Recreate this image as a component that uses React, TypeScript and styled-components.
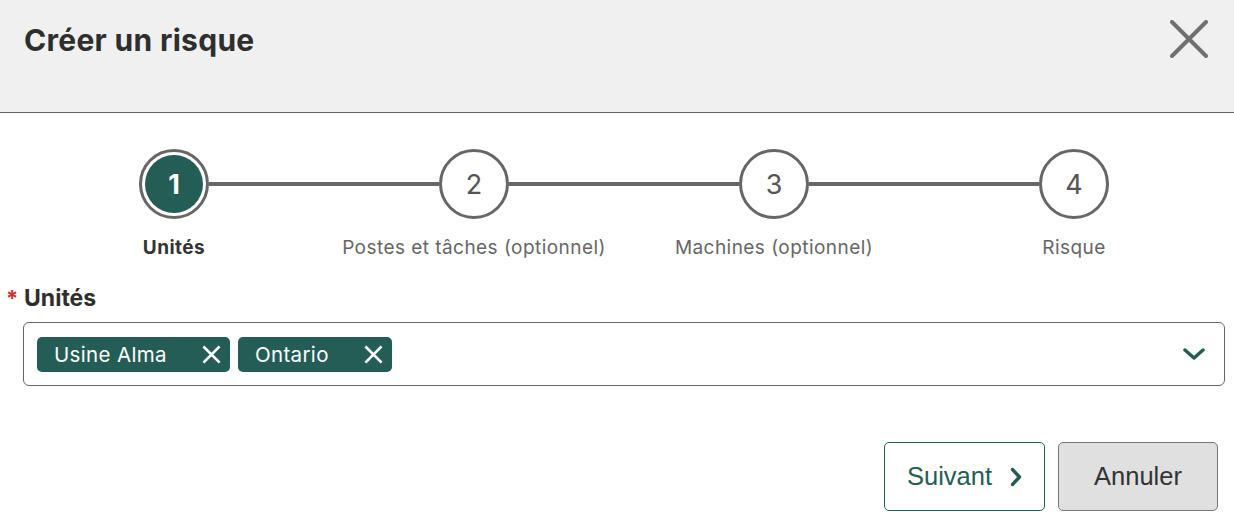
import React from 'react';
import styled, { createGlobalStyle } from 'styled-components';

const teal = '#245d56';

const GlobalStyle = createGlobalStyle`
  html, body {
    margin: 0;
    padding: 0;
    background: #ffffff;
    font-family: Inter, "Noto Sans", sans-serif;
  }
`;

const Dialog = styled.div`
  width: 1234px;
  min-height: 528px;
  background: #ffffff;
`;

const Header = styled.header`
  height: 113px;
  box-sizing: border-box;
  display: flex;
  justify-content: space-between;
  align-items: flex-start;
  padding: 20px 26px 0 24px;
  background: #f0f0f0;
  border-bottom: 1px solid #666666;
`;

const Title = styled.h1`
  margin: 0;
  font-size: 30px;
  line-height: 40px;
  font-weight: 700;
  color: #2e2e2e;
  letter-spacing: 0.3px;
`;

const CloseButton = styled.button`
  width: 38px;
  height: 38px;
  padding: 0;
  border: none;
  background: transparent;
  cursor: pointer;
  display: flex;
`;

const Body = styled.div`
  padding-top: 36px;
`;

const StepTrack = styled.div`
  display: flex;
  align-items: center;
  padding: 0 125px 0 139px;
`;

const StepCircle = styled.div`
  width: 70px;
  height: 70px;
  box-sizing: border-box;
  flex: none;
  border-radius: 50%;
  border: 3px solid #666666;
  padding: 3px;
  background: #ffffff;
  display: flex;
`;

const StepInner = styled.span<{ $active?: boolean }>`
  flex: 1;
  border-radius: 50%;
  display: flex;
  align-items: center;
  justify-content: center;
  font-size: 27px;
  font-weight: ${(p) => (p.$active ? 700 : 400)};
  color: ${(p) => (p.$active ? '#ffffff' : '#555555')};
  background: ${(p) => (p.$active ? teal : 'transparent')};
`;

const StepLine = styled.div`
  flex: 1;
  height: 4px;
  background: #666666;
`;

const StepLabels = styled.div`
  display: grid;
  grid-template-columns: repeat(4, 300px);
  padding: 16px 24px 0;
`;

const StepLabel = styled.span<{ $active?: boolean }>`
  text-align: center;
  font-size: 19px;
  line-height: 26px;
  letter-spacing: 0.45px;
  font-weight: ${(p) => (p.$active ? 700 : 400)};
  color: ${(p) => (p.$active ? '#333333' : '#666666')};
`;

const FieldLabel = styled.label`
  display: flex;
  align-items: baseline;
  margin-top: 22px;
  padding-left: 6px;
  font-size: 23px;
  line-height: 30px;
  font-weight: 700;
  color: #2e2e2e;
`;

const Required = styled.span`
  color: #d0312d;
  font-size: 22px;
  width: 18px;
`;

const SelectBox = styled.div`
  margin: 9px 9px 0 23px;
  height: 64px;
  box-sizing: border-box;
  border: 1px solid #666666;
  border-radius: 6px;
  padding: 0 19px 0 13px;
  display: flex;
  align-items: center;
  gap: 8px;
`;

const Chip = styled.span`
  height: 35px;
  box-sizing: border-box;
  display: inline-flex;
  align-items: center;
  gap: 35px;
  padding: 0 9px 0 17px;
  border-radius: 5px;
  background: ${teal};
  color: #ffffff;
  font-size: 20.5px;
  letter-spacing: 0.35px;
`;

const ChipRemove = styled.span`
  display: flex;
  width: 19px;
  height: 19px;
`;

const Spacer = styled.div`
  flex: 1;
`;

const Actions = styled.div`
  display: flex;
  justify-content: flex-end;
  gap: 13px;
  padding: 56px 16px 0 0;
`;

const Button = styled.button<{ $primary?: boolean }>`
  height: 69px;
  width: ${(p) => (p.$primary ? '161px' : '160px')};
  box-sizing: border-box;
  border-radius: 5px;
  border: 1px solid ${(p) => (p.$primary ? teal : '#777777')};
  background: ${(p) => (p.$primary ? '#ffffff' : '#e0e0e0')};
  color: ${(p) => (p.$primary ? teal : '#333333')};
  font-family: "Liberation Sans", Arial, sans-serif;
  font-size: 25.5px;
  display: flex;
  align-items: center;
  justify-content: center;
  gap: 18px;
  cursor: pointer;
`;

const steps = [
  { n: 1, label: 'Unités' },
  { n: 2, label: 'Postes et tâches (optionnel)' },
  { n: 3, label: 'Machines (optionnel)' },
  { n: 4, label: 'Risque' },
];

const units = ['Usine Alma', 'Ontario'];

const Cross = ({ size, color, width }: { size: number; color: string; width: number }) => (
  <svg width={size} height={size} viewBox="0 0 24 24">
    <path d="M3 3 L21 21 M21 3 L3 21" stroke={color} strokeWidth={width} strokeLinecap="square" />
  </svg>
);

export default function App() {
  return (
    <Dialog>
      <GlobalStyle />
      <Header>
        <Title>Créer un risque</Title>
        <CloseButton aria-label="Fermer">
          <svg width="38" height="38" viewBox="0 0 38 38">
            <path d="M2 2 L36 36 M36 2 L2 36" stroke="#707070" strokeWidth="4" strokeLinecap="round" />
          </svg>
        </CloseButton>
      </Header>
      <Body>
        <StepTrack>
          {steps.map((s, i) => (
            <React.Fragment key={s.n}>
              {i > 0 && <StepLine />}
              <StepCircle>
                <StepInner $active={i === 0}>{s.n}</StepInner>
              </StepCircle>
            </React.Fragment>
          ))}
        </StepTrack>
        <StepLabels>
          {steps.map((s, i) => (
            <StepLabel key={s.n} $active={i === 0}>
              {s.label}
            </StepLabel>
          ))}
        </StepLabels>

        <FieldLabel>
          <Required>*</Required>
          Unités
        </FieldLabel>
        <SelectBox>
          {units.map((u) => (
            <Chip key={u}>
              {u}
              <ChipRemove>
                <Cross size={19} color="#ffffff" width={3.4} />
              </ChipRemove>
            </Chip>
          ))}
          <Spacer />
          <svg width="22" height="12" viewBox="0 0 22 12">
            <path d="M2 2 L11 10 L20 2" fill="none" stroke={teal} strokeWidth="3.4" strokeLinecap="round" strokeLinejoin="round" />
          </svg>
        </SelectBox>

        <Actions>
          <Button $primary>
            Suivant
            <svg width="12" height="20" viewBox="0 0 12 20">
              <path d="M2.5 2.5 L9.5 10 L2.5 17.5" fill="none" stroke={teal} strokeWidth="3.4" strokeLinecap="round" strokeLinejoin="round" />
            </svg>
          </Button>
          <Button>Annuler</Button>
        </Actions>
      </Body>
    </Dialog>
  );
}
